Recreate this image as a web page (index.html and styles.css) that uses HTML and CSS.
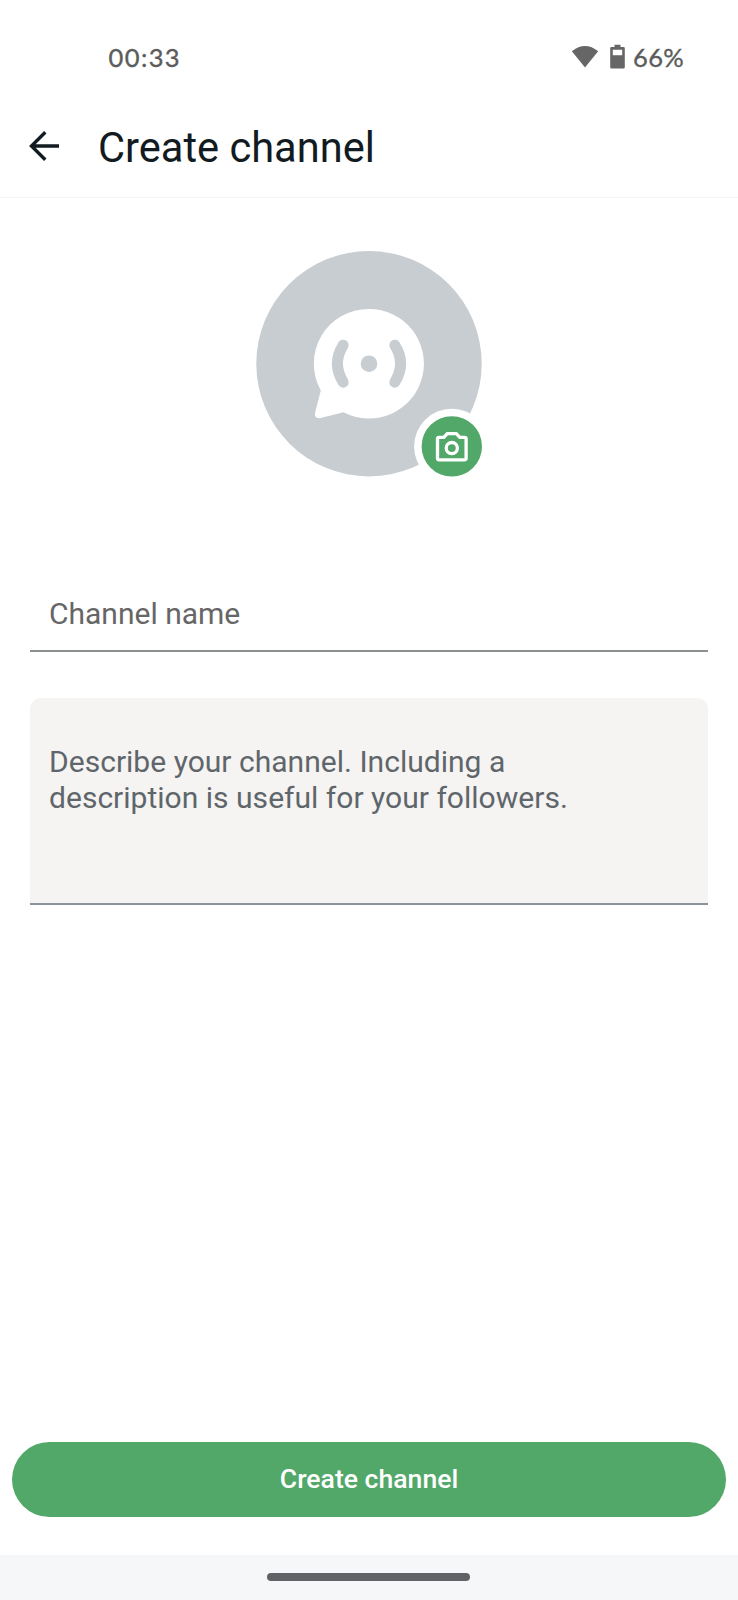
FILE: index.html
```
<!DOCTYPE html>
<html lang="en">
<head>
<meta charset="utf-8">
<title>Create channel</title>
<link rel="stylesheet" href="styles.css">
</head>
<body>
<div class="screen">
  <div class="status">
    <span class="clock">00:33</span>
    <div class="indicators">
      <svg class="wifi" width="28" height="24" viewBox="0 0 28 24"><path d="M.8 6.200Q14-4.200 27.200 6.200L14 22.600Z" fill="#666"/></svg>
      <svg class="battery" width="15" height="26" viewBox="0 0 15 26"><path fill-rule="evenodd" d="M4.500 .8h6v2.200h3q1.300 0 1.300 1.300v19q0 1.300-1.300 1.300h-12q-1.300 0-1.300-1.300V4.300q0-1.300 1.300-1.300h3zM2.800 5.800v5.400h9.400V5.800z" fill="#666"/></svg>
      <span class="percent">66%</span>
    </div>
  </div>
  <header class="appbar">
    <svg class="back" width="32" height="32" viewBox="0 0 32 32" fill="none" stroke="#111b21" stroke-width="3.400"><path d="M30 16H3M16.300 2.200L2.500 16l13.800 13.800"/></svg>
    <h1 class="title">Create channel</h1>
  </header>
  <main class="content">
    <svg class="avatar" width="228" height="228" viewBox="0 0 228 228">
      <circle cx="114" cy="113.700" r="112.700" fill="#c8cdd1"/>
      <path d="M114 58.900a54.800 54.800 0 1 1-25.400 103.300L65.500 168q-6.500 1-5.500-5L65.800 140.500A54.800 54.800 0 0 1 114 58.900Z" fill="#fff"/>
      <circle cx="114" cy="113.700" r="8.300" fill="#c8cdd1"/>
      <path d="M88.200 95.200q-11.600 18.500 0 37M139.800 95.200q11.600 18.500 0 37" fill="none" stroke="#c8cdd1" stroke-width="11" stroke-linecap="round"/>
      <circle cx="196.800" cy="196.400" r="37.700" fill="#fff"/>
      <circle cx="196.800" cy="196.400" r="30.200" fill="#52a868"/>
      <path d="M184 187.300h4.800l3.500-3.600h9l3.500 3.600h4.800q1.500 0 1.500 1.500v19.500q0 1.500-1.500 1.500h-25.600q-1.500 0-1.500-1.500v-19.500q0-1.500 1.500-1.500z" fill="none" stroke="#fff" stroke-width="3.300"/>
      <circle cx="196.800" cy="198.100" r="5.600" fill="none" stroke="#fff" stroke-width="3.300"/>
    </svg>
    <div class="name-field">Channel name</div>
    <div class="description-field">Describe your channel. Including a<br>description is useful for your followers.</div>
  </main>
  <button class="create">Create channel</button>
  <div class="navbar"><div class="handle"></div></div>
</div>
</body>
</html>
```
FILE: styles.css
```
* { box-sizing: border-box; }
body { margin: 0; background: #fff; font-family: Roboto, sans-serif; }
.screen { width: 738px; height: 1600px; display: flex; flex-direction: column; overflow: hidden; }
.status {
  height: 100px; padding: 13px 54px 0 108.500px;
  display: flex; align-items: center; justify-content: space-between;
  font-family: Lato, sans-serif; font-size: 25.5px; color: #5c5c5c;
  -webkit-text-stroke: .35px #5c5c5c;
}
.clock { letter-spacing: 1.4px; }
.percent { letter-spacing: .3px; }
.indicators { display: flex; align-items: center; }
.wifi { margin-right: 11px; }
.battery { margin-right: 8px; }
.appbar {
  height: 98px; padding: 0 0 4px 29px; border-bottom: 1px solid #f4f4f4;
  display: flex; align-items: center; gap: 37px;
}
.back { margin-bottom: 2px; }
.title { margin: 2px 0 0; font-size: 41.6px; font-weight: 400; line-height: 50px; color: #111b21; }
.content { flex: 1; padding: 52px 30px 0; display: flex; flex-direction: column; }
.avatar { align-self: center; }
.name-field {
  height: 93px; margin: 81px 0 46px; padding: 37px 19px 0;
  font-size: 30px; line-height: 35px; color: #666; border-bottom: 2px solid #8b8f90;
}
.description-field {
  height: 207px; padding: 46px 19px 0; border-radius: 11px 11px 0 0;
  background: #f5f4f2; border-bottom: 2px solid #8b9498;
  font-size: 30.060px; line-height: 35.500px; color: #5f666b;
}
.create {
  height: 75px; margin: 0 12px 38px; padding: 0 0 2px; border: 0; border-radius: 38px;
  background: #52a868; color: #fff; font: 500 26.6px Roboto, sans-serif;
}
.navbar { height: 45px; background: #f5f7f9; display: flex; justify-content: center; padding: 18px 1px 0 0; }
.handle { width: 203px; height: 8px; border-radius: 4px; background: #616265; }
```
